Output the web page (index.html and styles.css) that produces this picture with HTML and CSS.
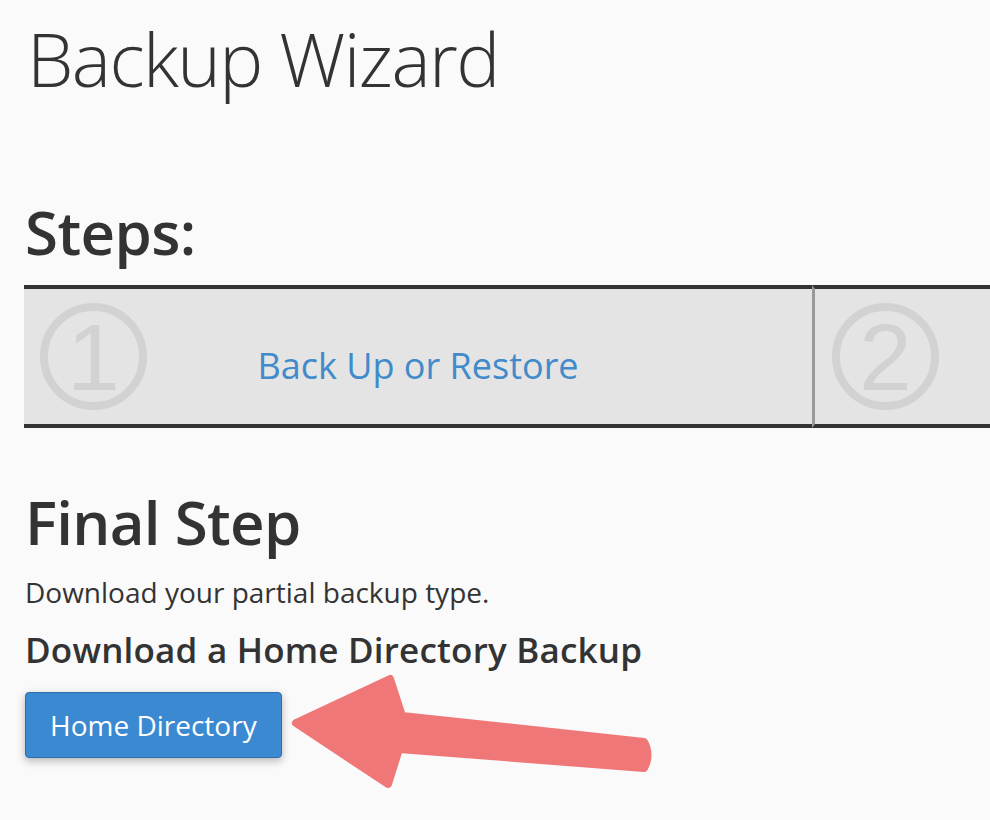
FILE: index.html
```html
<!DOCTYPE html>
<html lang="en">
<head>
<meta charset="utf-8">
<title>Backup Wizard</title>
<link rel="stylesheet" href="styles.css">
</head>
<body>
<main class="page">
  <h1 class="title">Backup Wizard</h1>
  <h2 class="steps-heading">Steps:</h2>
  <div class="steps">
    <div class="step">
      <div class="step-num"><span>1</span></div>
      <a class="step-label" href="#">Back Up or Restore</a>
    </div>
    <div class="step step-next">
      <div class="step-num"><span>2</span></div>
    </div>
  </div>
  <h2 class="final-heading">Final Step</h2>
  <p class="desc">Download your partial backup type.</p>
  <h3 class="sub-heading">Download a Home Directory Backup</h3>
  <button class="btn" type="button">Home Directory</button>
</main>
<svg class="arrow" width="990" height="820" viewBox="0 0 990 820" aria-hidden="true">
  <path d="M296 723 L390 679 L402 716 L644 742 Q651 755 644 768 L399 749 L388 784 Z" fill="#f07778" stroke="#f07778" stroke-width="8" stroke-linejoin="round"/>
</svg>
</body>
</html>
```
FILE: styles.css
```css
html, body {
  margin: 0;
  padding: 0;
  background: #fafafa;
}
body {
  position: relative;
  width: 990px;
  height: 820px;
  overflow: hidden;
  font-family: "Open Sans", "Liberation Sans", sans-serif;
  color: #333;
}
.page {
  padding: 22px 0 0 25px;
}
.title {
  margin: 0 0 0 2px;
  font-size: 74px;
  font-weight: 300;
  line-height: 1;
  height: 74px;
  letter-spacing: -1.6px;
}
.steps-heading {
  margin: 106px 0 0 0;
  font-size: 60px;
  font-weight: 600;
  line-height: 1;
  height: 60px;
  letter-spacing: -0.6px;
}
.steps {
  margin-top: 23px;
  margin-left: -1px;
  display: flex;
  width: 966px;
  overflow: hidden;
}
.step {
  flex: 0 0 788px;
  height: 135px;
  background: #e4e4e4;
  border-top: 4px solid #333;
  border-bottom: 4px solid #333;
  display: grid;
  align-items: center;
}
.step > * {
  grid-area: 1 / 1;
}
.step-next {
  flex: 0 0 300px;
  border-left: 3px solid #999;
}
.step-num {
  justify-self: start;
  margin-left: 16px;
  width: 91px;
  height: 91px;
  border: 8px solid #d2d2d2;
  border-radius: 50%;
  display: flex;
  align-items: center;
  justify-content: center;
}
.step-next .step-num {
  margin-left: 17px;
}
.step-num span {
  font-family: "Liberation Sans", Arial, sans-serif;
  font-size: 95px;
  line-height: 1;
  color: #d2d2d2;
  margin-top: 2px;
}
.step-label {
  justify-self: center;
  font-size: 36px;
  color: #428bca;
  text-decoration: none;
  margin-top: 18px;
}
.final-heading {
  margin: 64px 0 0 0;
  font-size: 60px;
  font-weight: 600;
  line-height: 1;
  height: 60px;
  letter-spacing: -0.7px;
}
.desc {
  margin: 26px 0 0 0;
  font-size: 28px;
  line-height: 1;
  height: 28px;
}
.sub-heading {
  margin: 26px 0 0 0;
  font-size: 35px;
  font-weight: 600;
  line-height: 1;
  height: 35px;
  letter-spacing: 0.2px;
}
.btn {
  margin-top: 25px;
  display: block;
  height: 66px;
  padding: 0 24px;
  background: #3a89d1;
  border: 1px solid #2b6eae;
  border-radius: 4px;
  color: #fff;
  font-family: "Open Sans", "Liberation Sans", sans-serif;
  font-size: 28px;
  box-shadow: 0 3px 9px rgba(0, 0, 0, 0.28);
}
.arrow {
  position: absolute;
  top: 0;
  left: 0;
  pointer-events: none;
}
```
